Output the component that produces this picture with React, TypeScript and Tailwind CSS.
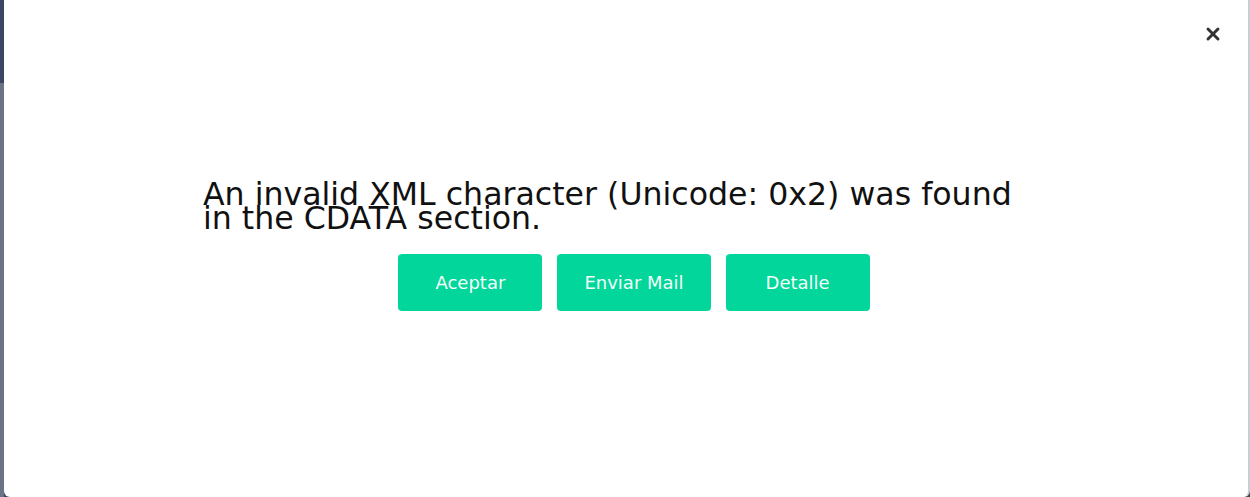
import React from 'react';
import { X } from 'lucide-react';

export default function App() {
  const buttons = ['Aceptar', 'Enviar Mail', 'Detalle'];
  return (
    <div className="flex h-[497px] w-[1250px] bg-[#3b4660]">
      {/* backdrop strip on the left */}
      <div className="flex w-[4px] flex-col">
        <div className="h-[83px] bg-[#3b4660]" />
        <div className="flex-1 bg-[#6b7384]" />
      </div>
      <div className="relative flex flex-1 flex-col rounded-br-[6px] rounded-bl-[6px] border-r-2 border-[#c9ccd2] bg-white">
        <button className="absolute right-[25px] top-[24px] text-[#333]">
          <X size={20} strokeWidth={3.5} />
        </button>
        <div className="mx-auto mt-[182px] flex w-[862px] translate-x-[8px] flex-col">
          <p className="w-[830px] text-[31.6px] leading-[24px] text-[#111] [font-family:'DejaVu_Sans',sans-serif]">
            An invalid XML character (Unicode: 0x2) was found in the CDATA section.
          </p>
          <div className="mt-[24px] flex justify-center gap-[15px]">
            {buttons.map((b) => (
              <button
                key={b}
                className="h-[57px] min-w-[144px] rounded-[4px] bg-[#02d69b] px-[27px] text-[18px] text-[#f4fff9] [font-family:'DejaVu_Sans',sans-serif]"
              >
                {b}
              </button>
            ))}
          </div>
        </div>
      </div>
    </div>
  );
}
